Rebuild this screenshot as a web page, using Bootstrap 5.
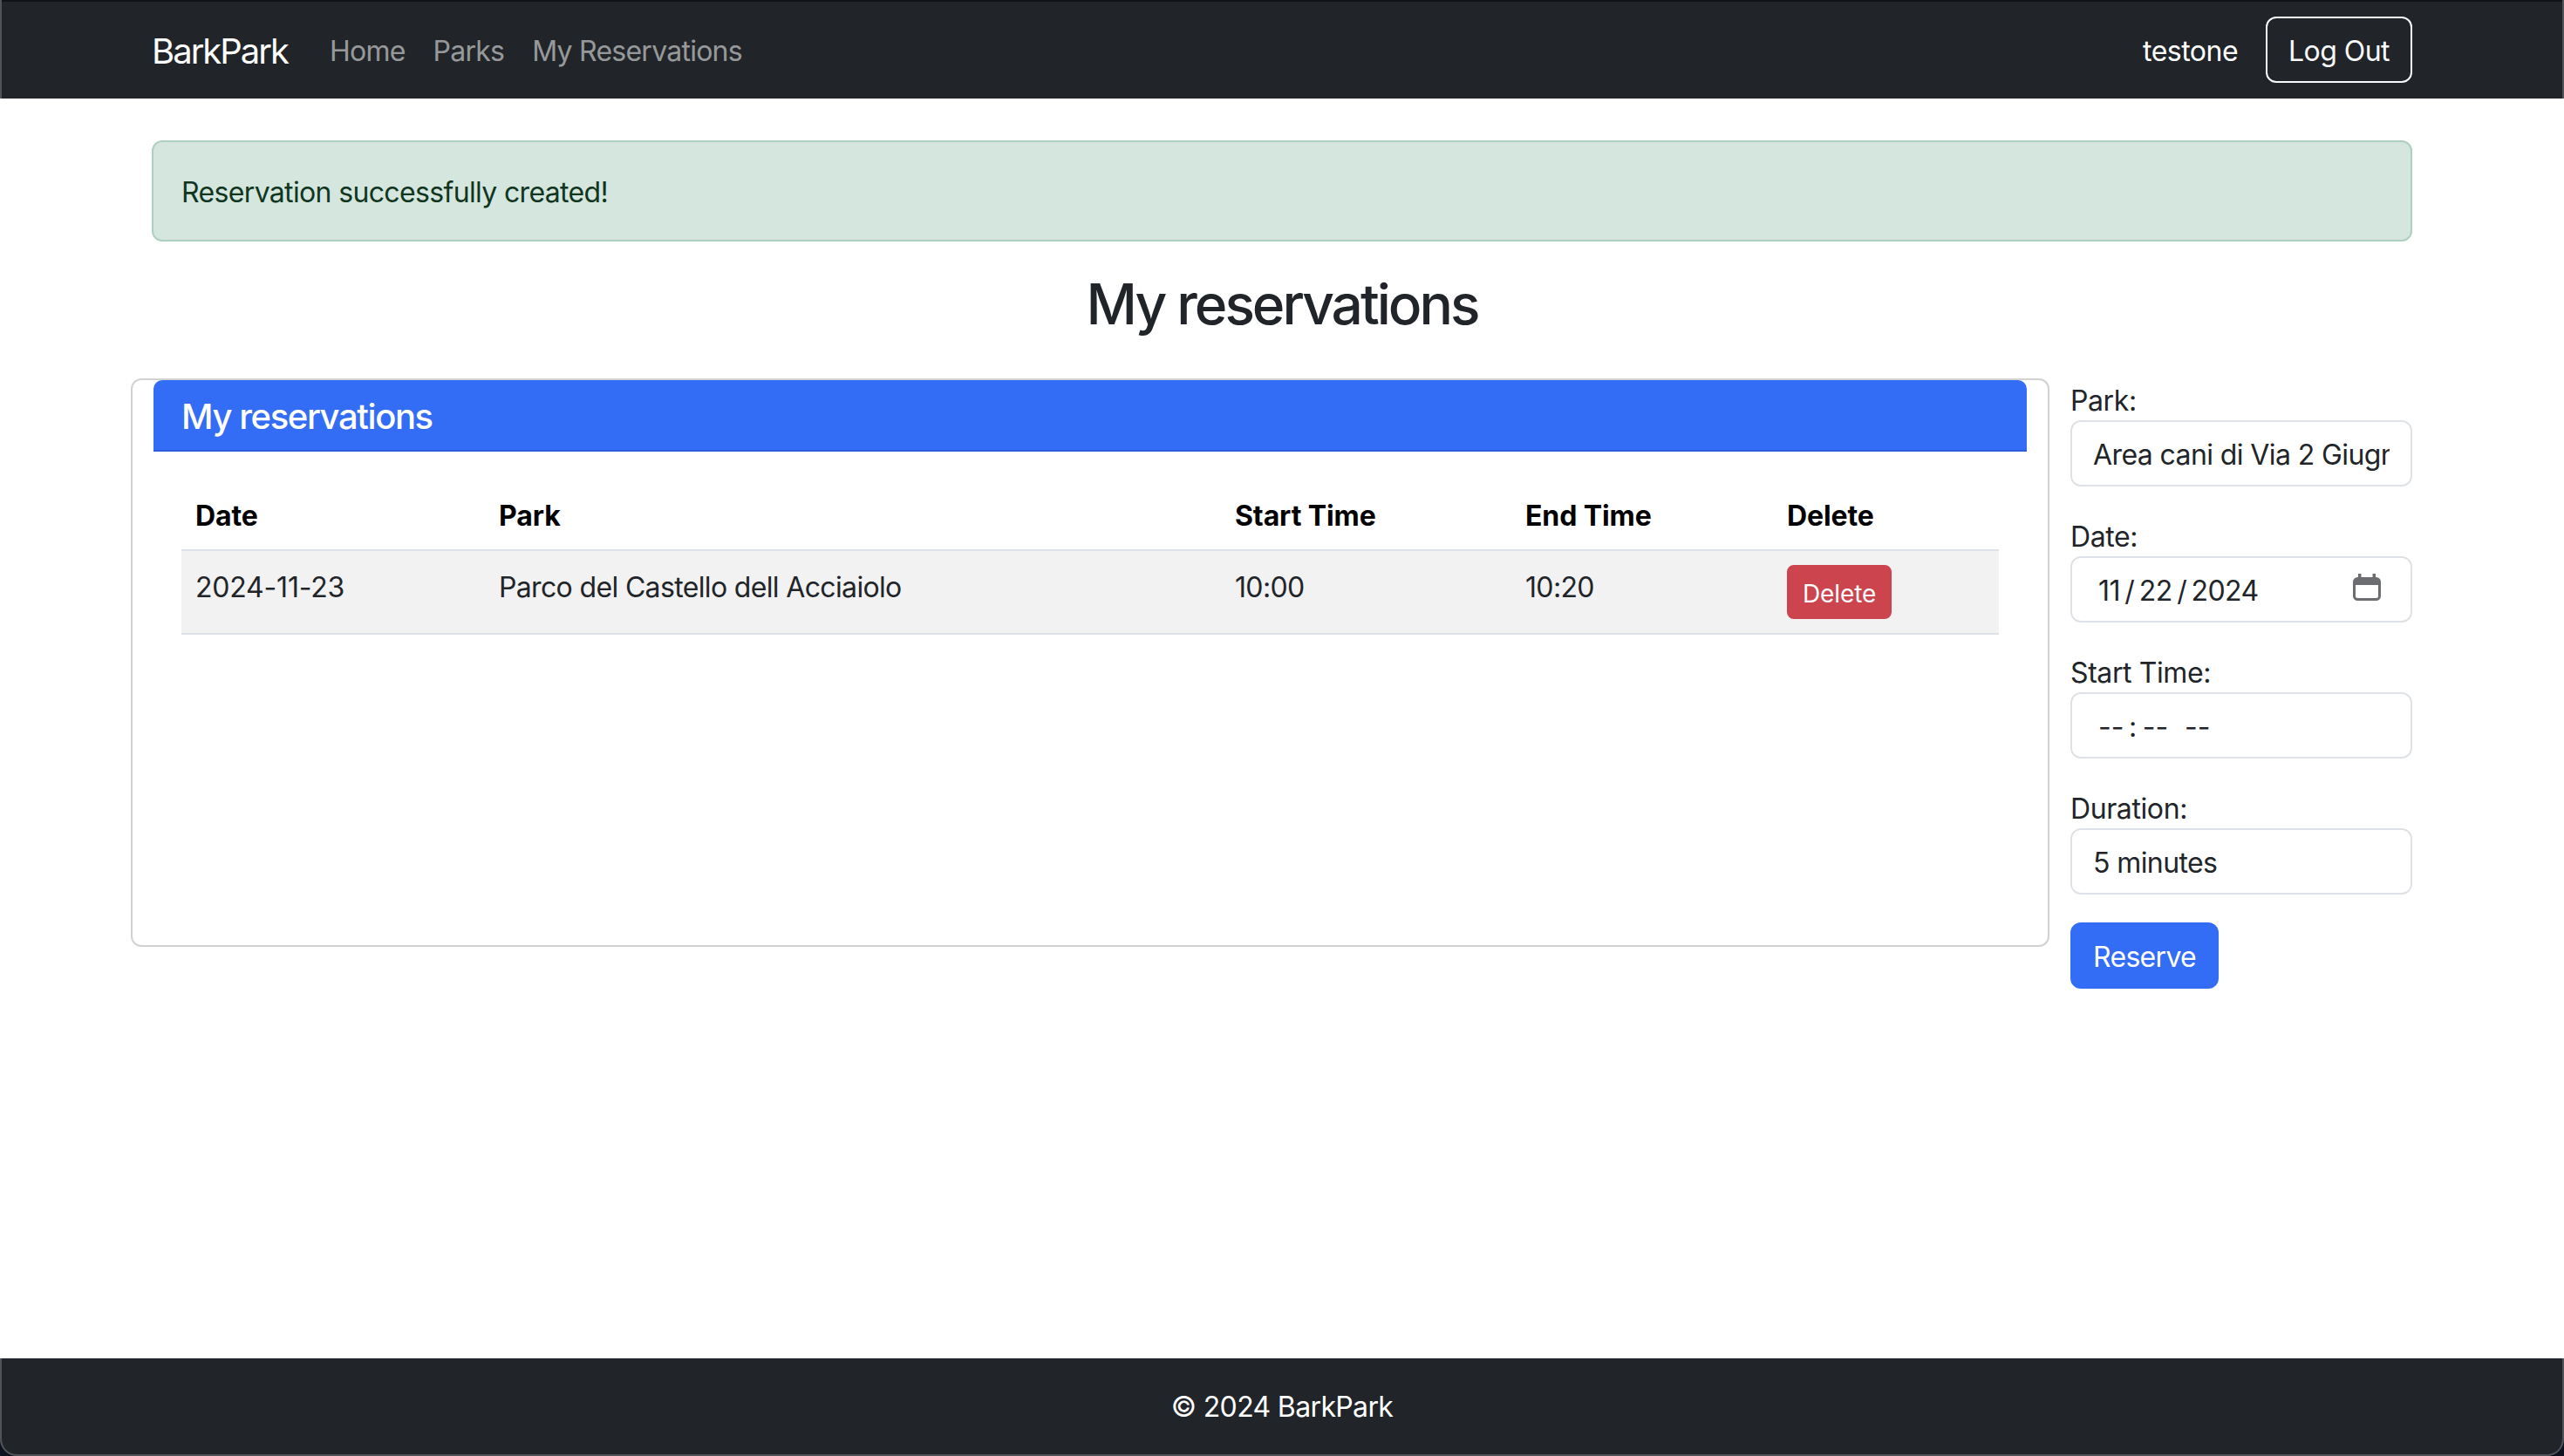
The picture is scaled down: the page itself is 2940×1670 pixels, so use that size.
<!DOCTYPE html>
<html lang="en">

<head>
    <meta charset="UTF-8">
    <title>BarkPark</title>
    <link href="https://cdn.jsdelivr.net/npm/bootstrap@5.3.0/dist/css/bootstrap.min.css" rel="stylesheet">
    <style>
        /* the reference is a 2x capture, so everything in rem doubles */
        html { font-size: 32px; }
        :root {
            --bs-border-width: 2px;
            --bs-body-font-family: Inter, "Liberation Sans", sans-serif;
            --bs-border-radius: 12px;
            --bs-border-radius-sm: 8px;
            --bs-border-radius-lg: 16px;
        }
        body { font-family: Inter, "Liberation Sans", sans-serif; letter-spacing: -0.65px; }
        .container { max-width: 2640px; }

        /* navbar */
        .bp-nav { padding-top: 19px; padding-bottom: 19px; height: 113px; box-shadow: inset 2px 0 #505357, inset -2px 0 #505357, inset 0 2px #111316; }
        .navbar-brand { letter-spacing: -2px; padding-top: 18px; padding-bottom: 14px; }
        .navbar-nav .nav-link { letter-spacing: -0.75px; padding-top: 18px; padding-bottom: 14px; }
        .bp-user { color: #fff; letter-spacing: -0.5px; padding-top: 4px; }

        /* headings, text sits 2px lower than Inter puts it */
        .bp-title { letter-spacing: -3px; padding-top: 2px; margin-bottom: 46px; }
        h5 { letter-spacing: -1.4px; }
        label { display: block; letter-spacing: -0.4px; padding-top: 2px; margin-bottom: -2px; }
        .btn { letter-spacing: -0.55px; padding-top: 14px; padding-bottom: 10px; }
        .btn-primary { letter-spacing: -0.7px; }
        .btn-sm { padding-top: 10px; padding-bottom: 6px; }
        .form-control { letter-spacing: -0.6px; padding-top: 14px; padding-bottom: 10px; }

        /* card and table */
        .bp-card { min-height: 652px; }
        .bp-head { background: #336cf5; border-bottom-color: #2c5fd9; padding-top: 18px; padding-bottom: 14px; }
        .bp-table { table-layout: fixed; }
        .bp-table th, .bp-table td { color: #000; padding-top: 18px; padding-bottom: 14px; }
        .bp-table th { letter-spacing: -0.1px; }
        .bp-table th:nth-child(1) { width: 348px; }
        .bp-table th:nth-child(2) { width: 844px; }
        .bp-table th:nth-child(3) { width: 333px; }
        .bp-table th:nth-child(4) { width: 300px; }
        .bp-table td:first-child { letter-spacing: -0.2px; }
        .bp-table td:last-child { padding-top: 16px; padding-bottom: 16px; }
        .bp-table td .btn { --bs-btn-bg: #cb444e; --bs-btn-border-color: #cb444e; letter-spacing: -0.1px; }
        .btn-primary { --bs-btn-bg: #336cf5; --bs-btn-border-color: #336cf5; }
        .bp-alert { background: #d5e6de; border-color: #aed0c1; color: #10361f; padding-top: 34px; padding-bottom: 30px; }

        /* form */
        .bp-form select { overflow: hidden; white-space: nowrap; }
        .bp-form input::-webkit-calendar-picker-indicator { opacity: 0; }
        .bp-form input::-webkit-datetime-edit { padding-left: 6px; }
        .bp-form input::-webkit-datetime-edit-text { padding: 0 5.5px; }
        .bp-cal { position: absolute; right: 36px; top: 20px; width: 32px; height: 32px; pointer-events: none; }

        /* footer, the capture keeps the window's rounded lower corners */
        .bp-foot { background: #0c1220; }
        .bp-foot-in { border-radius: 0 0 20px 20px; padding-top: 34px; padding-bottom: 30px; box-shadow: inset 2px 0 #505357, inset -2px 0 #505357, inset 0 -2px #505357; }
    </style>
</head>

<body class="d-flex flex-column min-vh-100">

    <nav class="navbar navbar-expand-lg navbar-dark bg-dark bp-nav">
        <div class="container">
            <a class="navbar-brand" href="#">BarkPark</a>
            <ul class="navbar-nav me-auto">
                <li class="nav-item"><a class="nav-link" href="#">Home</a></li>
                <li class="nav-item"><a class="nav-link" href="#">Parks</a></li>
                <li class="nav-item"><a class="nav-link" href="#">My Reservations</a></li>
            </ul>
            <span class="bp-user me-3">testone</span>
            <a class="btn btn-outline-light" href="#">Log Out</a>
        </div>
    </nav>

    <main class="container mt-4">
        <div class="alert alert-success bp-alert" role="alert">Reservation successfully created!</div>
        <h2 class="text-center bp-title">My reservations</h2>

        <div class="row align-items-start">
            <div class="col-10 card bp-card">
                <div class="card-header bp-head text-white">
                    <h5 class="mb-0">My reservations</h5>
                </div>
                <div class="card-body">
                    <table class="table table-striped bp-table">
                        <thead>
                            <tr>
                                <th>Date</th>
                                <th>Park</th>
                                <th>Start Time</th>
                                <th>End Time</th>
                                <th>Delete</th>
                            </tr>
                        </thead>
                        <tbody>
                            <tr>
                                <td>2024-11-23</td>
                                <td>Parco del Castello dell Acciaiolo</td>
                                <td>10:00</td>
                                <td>10:20</td>
                                <td><button class="btn btn-danger btn-sm">Delete</button></td>
                            </tr>
                        </tbody>
                    </table>
                </div>
            </div>

            <div class="col-2">
                <form class="bp-form">
                    <div class="mb-3">
                        <label for="park">Park:</label>
                        <select class="form-control" id="park">
                            <option>Area cani di Via 2 Giugno</option>
                        </select>
                    </div>
                    <div class="mb-3">
                        <label for="date">Date:</label>
                        <div class="position-relative">
                            <input type="date" class="form-control" id="date" value="2024-11-22">
                            <svg class="bp-cal" viewBox="0 0 32 32" fill="none" stroke="#6c6d70">
                                <rect x="1.5" y="5.5" width="29" height="24" rx="4" stroke-width="3"></rect>
                                <path d="M1.5 10h29" stroke-width="6"></path>
                                <path d="M7.7 0v5M24.3 0v5" stroke-width="3.5"></path>
                            </svg>
                        </div>
                    </div>
                    <div class="mb-3">
                        <label for="start">Start Time:</label>
                        <input type="time" class="form-control" id="start">
                    </div>
                    <div class="mb-3">
                        <label for="duration">Duration:</label>
                        <select class="form-control" id="duration">
                            <option>5 minutes</option>
                        </select>
                    </div>
                    <button type="submit" class="btn btn-primary">Reserve</button>
                </form>
            </div>
        </div>
    </main>

    <footer class="mt-auto bp-foot">
        <div class="bg-dark text-white text-center p-3 bp-foot-in">&copy; 2024 BarkPark</div>
    </footer>

    <script src="https://cdn.jsdelivr.net/npm/bootstrap@5.3.0/dist/js/bootstrap.bundle.min.js"></script>
</body>

</html>
